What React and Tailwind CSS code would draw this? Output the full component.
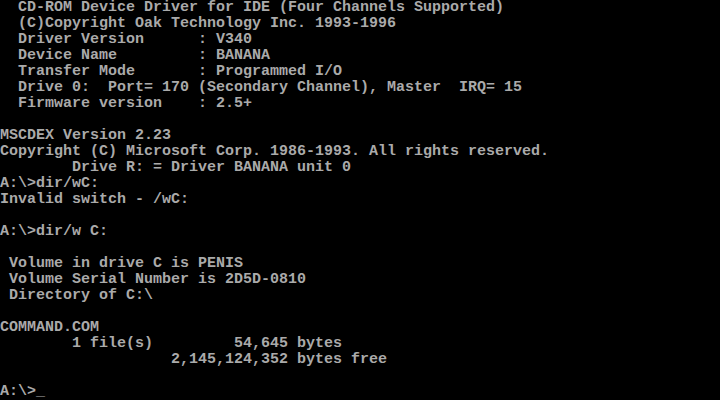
import React from 'react';

const lines = [
  '  CD-ROM Device Driver for IDE (Four Channels Supported)',
  '  (C)Copyright Oak Technology Inc. 1993-1996',
  '  Driver Version      : V340',
  '  Device Name         : BANANA',
  '  Transfer Mode       : Programmed I/O',
  '  Drive 0:  Port= 170 (Secondary Channel), Master  IRQ= 15',
  '  Firmware version    : 2.5+',
  '',
  'MSCDEX Version 2.23',
  'Copyright (C) Microsoft Corp. 1986-1993. All rights reserved.',
  '        Drive R: = Driver BANANA unit 0',
  'A:\\>dir/wC:',
  'Invalid switch - /wC:',
  '',
  'A:\\>dir/w C:',
  '',
  ' Volume in drive C is PENIS',
  ' Volume Serial Number is 2D5D-0810',
  ' Directory of C:\\',
  '',
  'COMMAND.COM',
  '        1 file(s)         54,645 bytes',
  '                   2,145,124,352 bytes free',
  '',
  'A:\\>_',
];

const App = () => {
  return (
    <div className="w-[720px] h-[400px] bg-black overflow-hidden">
      <div className="font-['Liberation_Mono',monospace] text-[15px] leading-[16px] text-[#aaaaaa] font-bold">
        {lines.map((line, i) => (
          <div key={i} className="h-[16px] whitespace-pre">{line}</div>
        ))}
      </div>
    </div>
  );
};

export default App;
